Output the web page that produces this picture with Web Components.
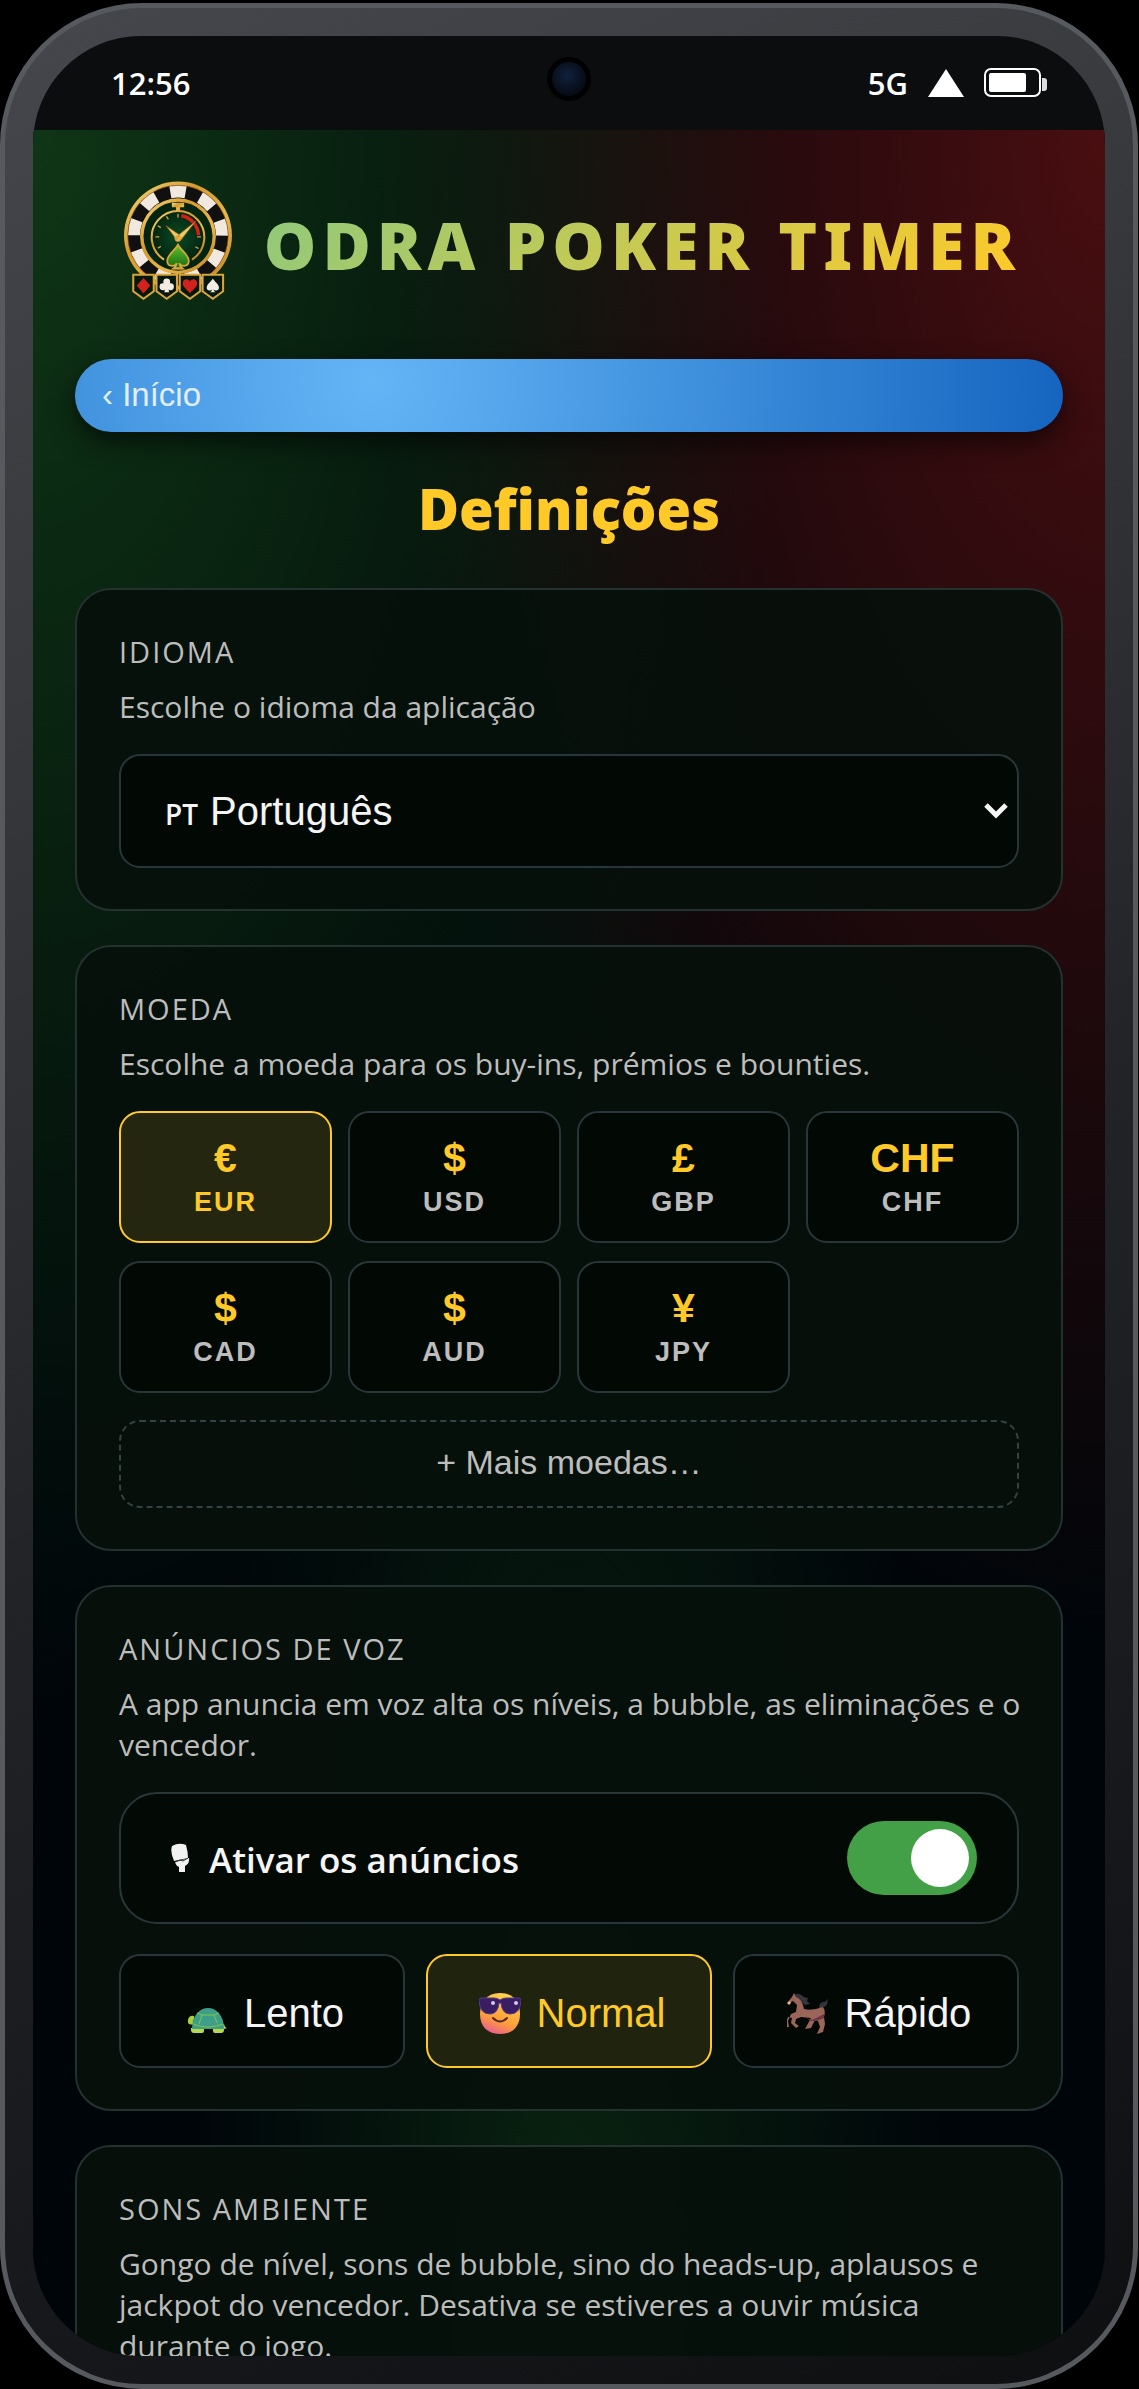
<!DOCTYPE html>
<html lang="pt">
<head>
<meta charset="utf-8">
<meta name="viewport" content="width=device-width, initial-scale=1">
<title>Odra Poker Timer</title>
<style>
  :root {
    --ui: "Open Sans", "Noto Sans", sans-serif;
    --control: "Liberation Sans", Arial, sans-serif;
    --black: "Noto Sans", "Open Sans", sans-serif;
    --gold: #ffca28;
    --muted: #bdbdbd;
    --text: #f5f5f5;
    --line: #293639;
    --field: #020804;
    --active: #25260f;
  }

  body {
    margin: 0;
    background: #000;
    color: var(--text);
    font-family: var(--ui);
  }
</style>
</head>
<body>

<phone-frame>
  <status-bar slot="status" time="12:56" network="5G"></status-bar>
  <app-brand>ODRA POKER TIMER</app-brand>
  <back-button>‹ Início</back-button>
  <page-title>Definições</page-title>

  <settings-card heading="Idioma">
    <language-select hint="Escolhe o idioma da aplicação"></language-select>
  </settings-card>

  <settings-card heading="Moeda" hint="Escolhe a moeda para os buy-ins, prémios e bounties.">
    <currency-grid selected="EUR"></currency-grid>
  </settings-card>

  <settings-card heading="Anúncios de voz" hint="A app anuncia em voz alta os níveis, a bubble, as eliminações e o vencedor.">
    <toggle-row>Ativar os anúncios</toggle-row>
    <speed-picker selected="Normal"></speed-picker>
  </settings-card>

  <settings-card heading="Sons ambiente" hint="Gongo de nível, sons de bubble, sino do heads-up, aplausos e jackpot do vencedor. Desativa se estiveres a ouvir música durante o jogo."></settings-card>
</phone-frame>

<script>

/**
 * Base class, renders the markup returned by template() into an open shadow root
 */
class BaseElement extends HTMLElement {
  connectedCallback(){
    if (this.shadowRoot) return;
    this.attachShadow({mode: 'open'}).innerHTML = `
      <style>
        *, *::before { box-sizing: border-box; }
        :host { display: block; box-sizing: border-box; }
        button, select { font-family: var(--control); margin: 0; cursor: pointer; }
        .hint { display: block; margin: 0 -10px 27px 0; font-size: 30px; line-height: 41px; color: var(--muted); }
      </style>` + this.template();
    this.ready();
  }

  template(){ return ''; }

  ready(){}
}

class PhoneFrame extends BaseElement {
  template(){
    return `
      <style>
        :host {
          display: flex;
          height: calc(100vh - 3px);
          margin: 3px 1px 0 0;
          padding: 28px;
          border: 5px solid #56595e;
          border-radius: 142px;
          background: linear-gradient(155deg, #45474c 0%, #36383c 25%, #222327 55%, #0e0f11 100%);
        }
        .screen {
          flex: 1;
          display: flex;
          flex-direction: column;
          min-width: 0;
          overflow: hidden;
          border-radius: 108px;
          background: #0b0d0f;
        }
        main {
          flex: 1;
          min-height: 0;
          display: flex;
          flex-direction: column;
          padding: 51px 42px 0;
          overflow: hidden;
          background:
            radial-gradient(ellipse at 0% 0%, rgba(27, 94, 32, .55), transparent 50%),
            radial-gradient(ellipse at 100% 0%, rgba(183, 28, 28, .4), transparent 48%),
            radial-gradient(ellipse at 50% 100%, rgba(27, 94, 32, .35), transparent 50%),
            #000509;
        }
        ::slotted(*) { flex-shrink: 0; }
      </style>
      <div class="screen">
        <slot name="status"></slot>
        <main><slot></slot></main>
      </div>`;
  }
}

class StatusBar extends BaseElement {
  template(){
    return `
      <style>
        :host {
          display: grid;
          grid-template-columns: 1fr 44px 1fr;
          align-items: center;
          height: 94px;
          flex-shrink: 0;
          padding: 0 58px 0 78px;
          color: #fff;
          font-size: 31px;
          font-weight: 600;
          line-height: 44px;
        }
        .camera {
          width: 44px;
          height: 44px;
          margin: 0 0 8px -10px;
          border: 5px solid #010101;
          border-radius: 50%;
          background: radial-gradient(circle at 45% 40%, #10203c, #060a12 75%);
        }
        .right { display: flex; justify-content: flex-end; align-items: center; gap: 20px; }
        svg { display: block; }
      </style>
      <span>${this.getAttribute('time')}</span>
      <div class="camera"></div>
      <div class="right">
        <span>${this.getAttribute('network')}</span>
        <svg width="36" height="28" viewBox="0 0 36 28"><path d="M18 0 36 28H0z" fill="#fff"/></svg>
        <svg width="63" height="30" viewBox="0 0 63 30">
          <rect x="1" y="1" width="55" height="27" rx="6" fill="none" stroke="#fff" stroke-width="2"/>
          <rect x="5" y="5" width="37" height="19" rx="2" fill="#fff"/>
          <path d="M58 10h2q3 0 3 3v7q0 3-3 3h-2z" fill="#ddd"/>
        </svg>
      </div>`;
  }
}

class AppBrand extends BaseElement {
  template(){
    return `
      <style>
        :host { display: flex; align-items: center; justify-content: center; gap: 31px; height: 120px; margin-bottom: 58px; }
        svg { flex: none; width: 110px; height: 120px; }
        h1 {
          margin: 0 -6px 0 0;
          padding-top: 6px;
          font: 900 66px/78px var(--black);
          letter-spacing: 6px;
          white-space: nowrap;
          background: linear-gradient(135deg, #8fc97c, #ffca28);
          background-clip: text;
          -webkit-background-clip: text;
          color: transparent;
        }
      </style>
      <svg viewBox="44 36 322 350" aria-hidden="true">
        <defs>
          <linearGradient id="gold" x1="0" y1="0" x2="1" y2="1">
            <stop offset="0" stop-color="#f7df86"/><stop offset=".35" stop-color="#d79a2b"/>
            <stop offset=".65" stop-color="#e9b84a"/><stop offset="1" stop-color="#b9761b"/>
          </linearGradient>
          <radialGradient id="felt"><stop offset="0" stop-color="#0a4a25"/><stop offset="1" stop-color="#04260f"/></radialGradient>
          <linearGradient id="leaf" x1="0" y1="0" x2="0" y2="1"><stop offset="0" stop-color="#62c22f"/><stop offset="1" stop-color="#14690f"/></linearGradient>
          <path id="spade" d="M0-20C-5-10-18-4-18 7c0 9 11 11 16 4-1 5-3 7-6 9H8C5 18 3 16 2 11c5 7 16 5 16-4C18-4 5-10 0-20z"/>
          <path id="badge" d="M-30-34H30V14L0 36-30 14z"/>
        </defs>
        <!-- chip ring -->
        <circle cx="205" cy="195" r="158" fill="url(#gold)"/>
        <circle cx="205" cy="195" r="147" fill="#101010"/>
        <circle cx="205" cy="195" r="129" fill="none" stroke="#f1e8df" stroke-width="36" pathLength="18" stroke-dasharray="1 1" transform="rotate(-100 205 195)"/>
        <circle cx="205" cy="195" r="147" fill="none" stroke="#8a5715" stroke-width="2"/>
        <circle cx="205" cy="197" r="111" fill="url(#gold)"/>
        <circle cx="205" cy="197" r="101" fill="#042412"/>
        <!-- stopwatch -->
        <path d="M187 99h36v13h-12v12h-12v-12h-12z" fill="url(#gold)"/>
        <circle cx="205" cy="197" r="74" fill="url(#felt)"/>
        <path d="M162 264A77 77 0 1 1 248 264" fill="none" stroke="url(#gold)" stroke-width="6" stroke-linecap="round"/>
        <path d="M215 137A61 61 0 0 1 265 194" fill="none" stroke="#d61f19" stroke-width="10"/>
        <path d="M205 131v11M171 139l6 9M146 167l9 5M139 199h11M146 232l9-5M261 199h11M256 228l9 5" stroke="#c9a24a" stroke-width="4"/>
        <path d="M170 166 198 204l14 6 46-58-50 40z" fill="#ecc869" stroke="#8a5715" stroke-width="2"/>
        <circle cx="205" cy="203" r="10" fill="url(#gold)"/>
        <use href="#spade" transform="translate(205 257) scale(1.75)" fill="url(#leaf)" stroke="#d9a63c" stroke-width="3"/>
        <path d="M189 292q16-5 32 0z" fill="#d9a63c" stroke="#d9a63c" stroke-width="3"/>
        <!-- suit badges -->
        <g fill="#05180d" stroke="#d8a53a" stroke-width="6">
          <use href="#badge" x="104" y="344"/><use href="#badge" x="172" y="344"/>
          <use href="#badge" x="240" y="344"/><use href="#badge" x="307" y="344"/>
        </g>
        <path d="M104 319 124 341 104 365 84 341z" fill="#d3221c"/>
        <g fill="#f3ece2"><circle cx="172" cy="331" r="10"/><circle cx="161" cy="345" r="10"/><circle cx="183" cy="345" r="10"/><path d="M170 335h4l5 26h-14z"/></g>
        <path d="M240 364C228 350 219 346 219 334c0-13 17-15 21-4 4-11 21-9 21 4 0 12-9 16-21 30z" fill="#d3221c"/>
        <use href="#spade" transform="translate(307 341)" fill="#f3ece2"/>
      </svg>
      <h1><slot></slot></h1>`;
  }
}

class BackButton extends BaseElement {
  template(){
    return `
      <style>
        button {
          display: block;
          width: 100%;
          height: 73px;
          padding: 0 27px 2px;
          border: 0;
          border-radius: 37px;
          background: radial-gradient(circle at 30% 30%, #64b5f6, #1565c0);
          box-shadow: 0 10px 26px rgba(0, 0, 0, .6);
          color: #e1effc;
          font-size: 33px;
          text-align: left;
        }
      </style>
      <button type="button"><slot></slot></button>`;
  }
}

class PageTitle extends BaseElement {
  template(){
    return `
      <style>
        h2 { margin: 37px 0 41px; font: 900 56px/78px var(--black); color: var(--gold); text-align: center; }
      </style>
      <h2><slot></slot></h2>`;
  }
}

/**
 * SettingsCard, a titled panel
 * heading - the small uppercase title
 * hint - optional description below the title
 */
class SettingsCard extends BaseElement {
  template(){
    const hint = this.getAttribute('hint');
    return `
      <style>
        :host {
          margin-bottom: 34px;
          padding: 41px 42px;
          border: 2px solid #243131;
          border-radius: 36px;
          background: rgba(6, 16, 11, .93);
        }
        h3 {
          margin: 0 0 14px;
          font-size: 29px;
          font-weight: 400;
          line-height: 41px;
          letter-spacing: 2px;
          text-transform: uppercase;
          color: var(--muted);
        }
      </style>
      <h3>${this.getAttribute('heading')}</h3>
      ${hint ? `<p class="hint">${hint}</p>` : ''}
      <slot></slot>`;
  }
}

class LanguageSelect extends BaseElement {
  template(){
    return `
      <style>
        .field {
          display: flex;
          align-items: center;
          height: 114px;
          padding: 0 9px 0 44px;
          border: 2px solid var(--line);
          border-radius: 21px;
          background: var(--field);
        }
        .code { padding-top: 6px; font-size: 28px; font-weight: 600; line-height: 40px; }
        select {
          flex: 1;
          min-width: 0;
          height: 100%;
          padding: 0 12px;
          border: 0;
          outline: none;
          appearance: none;
          background: transparent;
          color: var(--text);
          font-size: 40px;
        }
        option { background: var(--field); }
      </style>
      <label class="hint" for="language">${this.getAttribute('hint')}</label>
      <div class="field">
        <span class="code">PT</span>
        <select id="language">
          <option>Português</option>
        </select>
        <svg width="24" height="16" viewBox="0 0 24 16"><path d="M2 2 12 12 22 2" fill="none" stroke="#f5f5f5" stroke-width="5"/></svg>
      </div>`;
  }
}

class CurrencyGrid extends BaseElement {
  template(){
    const currencies = [['€', 'EUR'], ['$', 'USD'], ['£', 'GBP'], ['CHF', 'CHF'], ['$', 'CAD'], ['$', 'AUD'], ['¥', 'JPY']];
    const selected = this.getAttribute('selected');
    return `
      <style>
        .grid { display: grid; grid-template-columns: repeat(4, 1fr); gap: 18px 16px; }
        .grid button {
          display: flex;
          flex-direction: column;
          align-items: center;
          justify-content: center;
          height: 132px;
          padding: 2px 0 0;
          border: 2px solid var(--line);
          border-radius: 21px;
          background: var(--field);
          color: var(--muted);
          font-weight: 700;
        }
        b { font-size: 41px; line-height: 48px; color: var(--gold); }
        span { font-size: 27px; line-height: 40px; letter-spacing: 2px; }
        .grid [aria-pressed="true"] { border-color: var(--gold); background: var(--active); color: var(--gold); }
        .more {
          width: 100%;
          height: 88px;
          margin-top: 27px;
          padding: 0 0 4px;
          border: 2px dashed #334244;
          border-radius: 21px;
          background: none;
          color: var(--muted);
          font-size: 34px;
        }
      </style>
      <div class="grid">
        ${currencies.map(([symbol, code]) => `<button type="button" aria-pressed="${code === selected}"><b>${symbol}</b><span>${code}</span></button>`).join('')}
      </div>
      <button class="more" type="button">+ Mais moedas…</button>`;
  }

  ready(){
    const buttons = this.shadowRoot.querySelectorAll('.grid button');
    buttons.forEach(button => button.addEventListener('click', () => {
      buttons.forEach(b => b.setAttribute('aria-pressed', b === button));
    }));
  }
}

class ToggleRow extends BaseElement {
  template(){
    return `
      <style>
        label {
          display: flex;
          align-items: center;
          height: 132px;
          padding: 0 40px 0 49px;
          border: 2px solid var(--line);
          border-radius: 38px;
          background: #030a06;
          font-size: 35px;
          font-weight: 600;
          line-height: 48px;
        }
        svg { margin-right: 19px; }
        .text { flex: 1; padding-top: 4px; }
        input {
          flex: none;
          width: 130px;
          height: 74px;
          margin: 0;
          padding: 8px;
          appearance: none;
          border-radius: 37px;
          background: #37474f;
        }
        input::before { content: ""; display: block; width: 58px; height: 58px; border-radius: 50%; background: #fff; }
        input:checked { background: #43a047; }
        input:checked::before { margin-left: auto; }
      </style>
      <label>
        <svg width="20" height="30" viewBox="0 0 20 30" aria-hidden="true">
          <path d="M2 3Q9-1 16 2q2 7 2 13L4 18Q0 9 2 3z" fill="#f2f2f2"/>
          <path d="M5 19l14-4q1 5-4 8v6H9v-5q-3-1-4-5z" fill="#f2f2f2"/>
          <path d="M5 19l5-2 3 1 5-3" fill="none" stroke="#2b302d"/>
        </svg>
        <span class="text"><slot></slot></span>
        <input type="checkbox" checked>
      </label>`;
  }
}

const speedIcons = {
  Lento: `
    <path d="M8 31Q1 33 2 27q1-5 6-4v4q-2 0-1 1z" fill="#a5cf3c"/>
    <path d="M5 35h13v3q0 2-2 2H8q-3 0-3-3zM27 35l11-4q1 4 3 4l-3 1v1q0 3-3 3h-6q-2 0-2-2z" fill="#b7d84b"/>
    <path d="M6 36C6 8 38 8 38 36z" fill="#3f9e88"/>
    <path d="M7 31q15 6 30 0M16 22h12l3 8M16 22l-3 9M16 22l-5-2M28 22l5-2" fill="none" stroke="#78c850" stroke-width="1"/>`,
  Normal: `
    <defs><linearGradient id="face" x1=".7" y1="0" x2=".3" y2="1"><stop offset="0" stop-color="#ffd64d"/><stop offset=".65" stop-color="#ff9f38"/><stop offset="1" stop-color="#e85c91"/></linearGradient></defs>
    <path d="M21 0C34 0 41 9 41 21 41 34 33 41 21 41S1 34 1 21C1 9 8 0 21 0z" fill="url(#face)"/>
    <path d="M2 5h13q3 0 6 2 3-2 6-2h13q2 0 2 3-1 13-11 13-8 0-9-11h-2q-1 11-9 11Q1 21 0 8q0-3 2-3z" fill="#3a1e63" stroke="#54398c"/>
    <circle cx="14" cy="10" r="2" fill="#d6c8f0"/><circle cx="37" cy="10" r="2" fill="#d6c8f0"/>
    <path d="M14 25q7 7 14 0" fill="none" stroke="#57292a" stroke-width="2" stroke-linecap="round"/>`,
  Rápido: `
    <path d="M8 1q5-1 9 3l4 1-1 3 3 3-5 1-9-7zM32 15q0-5 4-6 4 0 4-4 2 7-3 9-3 0-3 4z" fill="#34343a"/>
    <path d="M0 10 5 4 7 0l2 4q6 2 8 12 8 2 19-2 3 4 1 10l1 7-2 8-6 2 3-7-2-6-3-1-4 8-6 1 6-11-10-1-5 2-1 4 4 3-3 2-5-5 1-5-4-1-2 5 1 5H2l-1-6 3-7 5-2 1-7-4-4-4 2z" fill="#9b655a"/>
    <path d="M19 25l6 2 12-6v4l-8 3-5 0z" fill="#6f3548"/><path d="M0 10l3-2 1 2-2 2z" fill="#f0b57c"/>`
};

class SpeedPicker extends BaseElement {
  template(){
    const selected = this.getAttribute('selected');
    return `
      <style>
        :host { display: grid; grid-template-columns: repeat(3, 1fr); gap: 21px; margin-top: 30px; }
        button {
          display: flex;
          align-items: center;
          justify-content: center;
          gap: 16px;
          height: 114px;
          padding: 4px 0 0 6px;
          border: 2px solid var(--line);
          border-radius: 21px;
          background: var(--field);
          color: var(--text);
          font-size: 40px;
        }
        button[aria-pressed="true"] { border-color: var(--gold); background: #20240f; color: var(--gold); }
      </style>
      ${Object.keys(speedIcons).map(name => `
        <button type="button" aria-pressed="${name === selected}">
          <svg width="42" height="41" viewBox="0 0 42 41" aria-hidden="true">${speedIcons[name]}</svg>
          <span>${name}</span>
        </button>`).join('')}`;
  }

  ready(){
    const buttons = this.shadowRoot.querySelectorAll('button');
    buttons.forEach(button => button.addEventListener('click', () => {
      buttons.forEach(b => b.setAttribute('aria-pressed', b === button));
    }));
  }
}

customElements.define('phone-frame', PhoneFrame);
customElements.define('status-bar', StatusBar);
customElements.define('app-brand', AppBrand);
customElements.define('back-button', BackButton);
customElements.define('page-title', PageTitle);
customElements.define('settings-card', SettingsCard);
customElements.define('language-select', LanguageSelect);
customElements.define('currency-grid', CurrencyGrid);
customElements.define('toggle-row', ToggleRow);
customElements.define('speed-picker', SpeedPicker);

</script>
</body>
</html>
